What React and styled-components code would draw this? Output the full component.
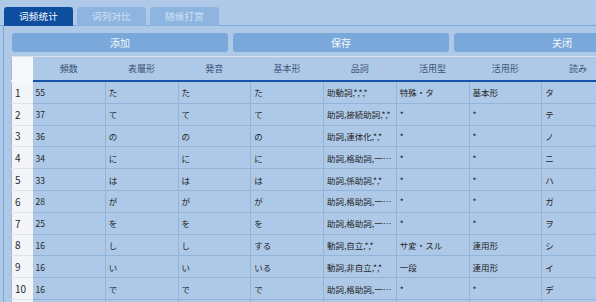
import React, { useState } from 'react';
import styled, { createGlobalStyle } from 'styled-components';

const GlobalStyle = createGlobalStyle`
  html, body {
    margin: 0;
    padding: 0;
    background: #adc9e7;
    overflow: hidden;
  }
  body {
    font-family: "Noto Sans CJK SC", "Noto Sans CJK JP", sans-serif;
  }
`;

const Page = styled.div`
  width: 720px;
  padding-top: 7px;
`;

const TabBar = styled.div`
  display: flex;
  gap: 4px;
  padding-left: 4px;
  height: 18px;
  border-bottom: 1px solid #7ea8d8;
`;

const Tab = styled.div`
  width: 69px;
  height: 19px;
  border-radius: 3px 3px 0 0;
  background: ${({ active }) => (active ? '#0d4e9e' : '#8db5e0')};
  color: ${({ active }) => (active ? '#ffffff' : '#d2e2f3')};
  font-size: 9.5px;
  letter-spacing: 0.3px;
  line-height: 19px;
  text-align: center;
  cursor: pointer;
  position: relative;
  z-index: 1;
`;

const Panel = styled.div`
  margin-left: 3px;
  border-left: 1px solid #7ba6d7;
  padding: 7px 0 0 8px;
`;

const ButtonRow = styled.div`
  display: flex;
  gap: 5px;
`;

const Button = styled.button`
  width: 216px;
  height: 19px;
  padding: 0;
  border: none;
  border-radius: 3px;
  background: #7aa8da;
  color: #f4f8fc;
  font-family: "Noto Sans CJK SC", sans-serif;
  font-size: 10px;
  cursor: pointer;
`;

const Table = styled.table`
  margin: 4px 0 0 -1px;
  border-collapse: collapse;
  table-layout: fixed;
  width: 604px;
  border-top: 1px solid #d9e1ea;
  border-left: 1px solid #a9b8c8;
  font-family: "Noto Sans CJK JP", sans-serif;
`;

const HeadCell = styled.th`
  height: 23px;
  padding: 0;
  font-size: 9px;
  font-weight: normal;
  color: #3d5478;
  text-align: center;
  background: ${({ num }) => (num ? '#f7f8fa' : '#adc9e7')};
  border-bottom: 2px solid ${({ num }) => (num ? '#f7f8fa' : '#1553a6')};
`;

const NumCell = styled.td`
  height: 20.8px;
  padding: 0 0 0 3px;
  font-size: 10px;
  color: #2a2a2a;
  background: #f4f5f8;
  border-bottom: 1px solid #dde3ea;
`;

const Cell = styled.td`
  padding: 0 3px;
  font-size: 8.5px;
  color: #252525;
  white-space: nowrap;
  overflow: hidden;
  text-overflow: ellipsis;
  border-right: 1px solid #93b4d9;
  border-bottom: 1px solid #93b4d9;
`;

const tabs = ['词频统计', '词列对比', '随缘打赏'];
const buttons = ['添加', '保存', '关闭'];
const columns = ['頻数', '表層形', '発音', '基本形', '品詞', '活用型', '活用形', '読み'];

const rows = [
  ['55', 'た', 'た', 'た', '助動詞,*,*,*', '特殊・タ', '基本形', 'タ'],
  ['37', 'て', 'て', 'て', '助詞,接続助詞,*,*', '*', '*', 'テ'],
  ['36', 'の', 'の', 'の', '助詞,連体化,*,*', '*', '*', 'ノ'],
  ['34', 'に', 'に', 'に', '助詞,格助詞,一般,*', '*', '*', 'ニ'],
  ['33', 'は', 'は', 'は', '助詞,係助詞,*,*', '*', '*', 'ハ'],
  ['28', 'が', 'が', 'が', '助詞,格助詞,一般,*', '*', '*', 'ガ'],
  ['25', 'を', 'を', 'を', '助詞,格助詞,一般,*', '*', '*', 'ヲ'],
  ['16', 'し', 'し', 'する', '動詞,自立,*,*', 'サ変・スル', '連用形', 'シ'],
  ['16', 'い', 'い', 'いる', '動詞,非自立,*,*', '一段', '連用形', 'イ'],
  ['16', 'で', 'で', 'で', '助詞,格助詞,一般,*', '*', '*', 'デ'],
  ['', '', '', '', '', '', '', ''],
];

const App = () => {
  const [active, setActive] = useState(0);

  return (
    <Page>
      <GlobalStyle />
      <TabBar>
        {tabs.map((t, i) => (
          <Tab key={t} active={i === active} onClick={() => setActive(i)}>
            {t}
          </Tab>
        ))}
      </TabBar>
      <Panel>
        <ButtonRow>
          {buttons.map((b) => (
            <Button key={b}>{b}</Button>
          ))}
        </ButtonRow>
        <Table>
          <colgroup>
            <col style={{ width: 21 }} />
            {columns.map((c) => (
              <col key={c} style={{ width: 72.75 }} />
            ))}
          </colgroup>
          <thead>
            <tr>
              <HeadCell num />
              {columns.map((c) => (
                <HeadCell key={c}>{c}</HeadCell>
              ))}
            </tr>
          </thead>
          <tbody>
            {rows.map((r, i) => (
              <tr key={i}>
                <NumCell>{i < 10 ? i + 1 : ''}</NumCell>
                {r.map((v, j) => (
                  <Cell key={j}>{v}</Cell>
                ))}
              </tr>
            ))}
          </tbody>
        </Table>
      </Panel>
    </Page>
  );
};

export default App;
